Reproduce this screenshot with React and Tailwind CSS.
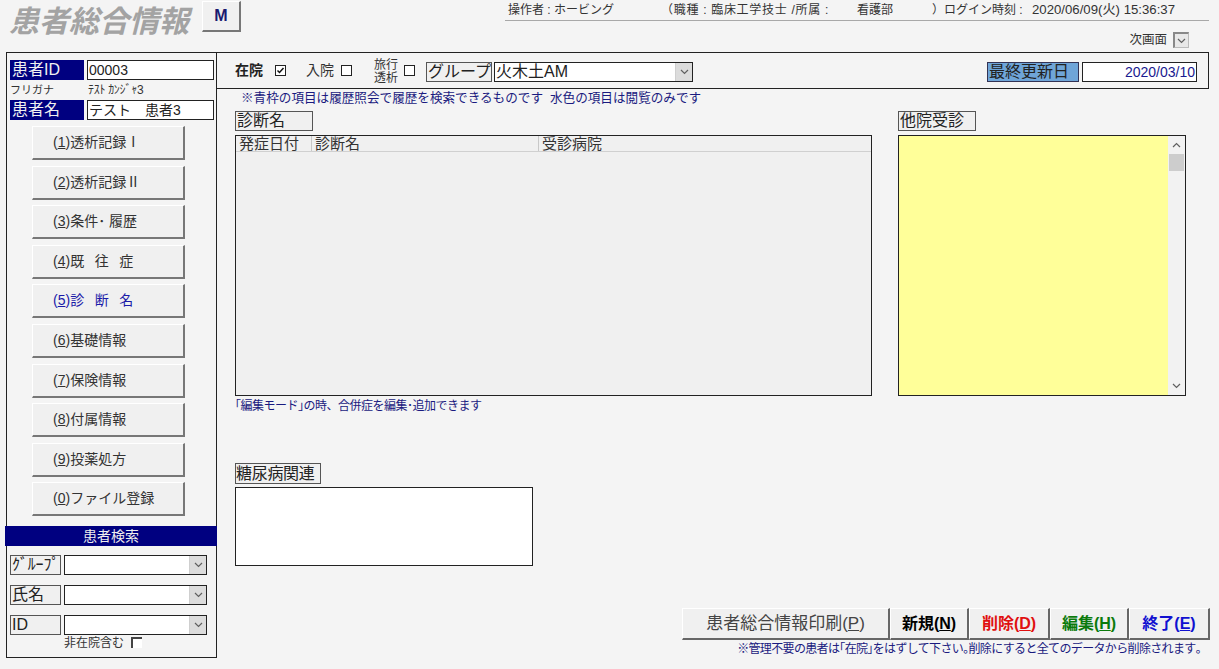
const JP = "font-['Liberation_Sans','Noto_Sans_CJK_JP',sans-serif]";

function Chevron({ className = "" }) {
  return (
    <svg width="9" height="6" viewBox="0 0 9 6" className={className}>
      <path d="M1 1 L4.5 4.5 L8 1" fill="none" stroke="#606060" strokeWidth="1.2" />
    </svg>
  );
}

function Combo({ text = "", className = "" }) {
  return (
    <div className={`flex border border-[#222] bg-white ${className}`}>
      <div className="flex-1 min-w-0 pl-px text-[16px] leading-[18px] text-[#222] whitespace-nowrap">{text}</div>
      <div className="w-[17px] bg-[#dcdcdc] border-l border-[#cfcfcf] flex items-center justify-center">
        <Chevron />
      </div>
    </div>
  );
}

function Label({ children, className = "" }) {
  return (
    <div className={`border border-[#555] bg-[#f0f0f0] text-[#222] whitespace-nowrap overflow-hidden ${className}`}>
      {children}
    </div>
  );
}

function Check({ checked, className = "" }) {
  return (
    <span className={`inline-flex w-[11px] h-[11px] border border-[#222] bg-white items-center justify-center ${className}`}>
      {checked && (
        <svg width="9" height="9" viewBox="0 0 9 9">
          <path d="M1.5 4.5 L3.5 6.5 L7.5 2" fill="none" stroke="#111" strokeWidth="1.5" />
        </svg>
      )}
    </span>
  );
}

function NavButton({ k, label, active }) {
  return (
    <div className={`h-[34px] w-[153px] ml-[25px] mb-[5.6px] flex items-center pl-[20px] text-[14px] bg-[#f0f0f0] border-t border-l border-white border-r-2 border-b-2 border-r-[#777] border-b-[#777] whitespace-nowrap ${active ? "text-[#1a1aa8]" : "text-[#333]"}`}>
      (<span className="underline">{k}</span>){label}
    </div>
  );
}

function ActionButton({ k, label, color, className = "" }) {
  return (
    <div className={`h-[32px] flex items-center justify-center text-[16px] font-bold bg-[#f0f0f0] border-t border-l border-white border-r-2 border-b-2 border-r-[#666] border-b-[#666] whitespace-nowrap ${color} ${className}`}>
      {label}(<span className="underline">{k}</span>)
    </div>
  );
}

const nav = [
  ["1", "透析記録Ⅰ"],
  ["2", "透析記録Ⅱ"],
  ["3", "条件･ 履歴"],
  ["4", "既\u2002\u2005往\u2002\u2005症"],
  ["5", "診\u2002\u2005断\u2002\u2005名", true],
  ["6", "基礎情報"],
  ["7", "保険情報"],
  ["8", "付属情報"],
  ["9", "投薬処方"],
  ["0", "ファイル登録"],
];

export default function App() {
  return (
    <div className={`w-[1219px] h-[669px] overflow-hidden bg-[#f4f4f4] text-[#222] ${JP}`}>
      {/* Header */}
      <div className="h-[52px] flex items-start">
        <div className="w-[190px] ml-[9px] mt-[1px] text-[30px] leading-[42px] font-bold italic text-[#a3a3a3] whitespace-nowrap">
          患者総合情報
        </div>
        <div className="ml-[3px] mt-[1px] w-[39px] h-[31px] flex items-center justify-center text-[16px] font-bold text-[#1a1a70] bg-[#f0f0f0] border-t border-l border-white border-r-2 border-b-2 border-r-[#777] border-b-[#777]">
          M
        </div>
        <div className="ml-[264px] flex flex-col">
          <div className="h-[21px] w-[704px] pl-[3px] border-b border-[#a8a8a8] flex items-center text-[12px] leading-[20px] text-[#333] whitespace-nowrap">
            <span className="w-[153px]">操作者 : ホービング</span>
            <span className="w-[196px] tracking-[0.7px]">（職種 : 臨床工学技士 /所属 :</span>
            <span className="w-[75px]">看護部</span>
            <span className="w-[100px]">）ログイン時刻 :</span>
            <span className="text-[13.2px]">2020/06/09(火) 15:36:37</span>
          </div>
          <div className="flex justify-end items-center h-[26px] w-[684px] mt-[6px] text-[12.5px] gap-[6px] text-[#333]">
            次画面
            <span className="w-[16px] h-[16px] border border-[#bbb] border-t-2 border-l-2 border-t-[#888] border-l-[#888] bg-[#e8e8e8] flex items-center justify-center">
              <Chevron />
            </span>
          </div>
        </div>
      </div>

      <div className="flex items-start">
        {/* Sidebar */}
        <div className="ml-[6px] w-[211px] h-[606px] border border-[#222] flex flex-col">
          <div className="flex mt-[7px] ml-[3px] h-[20px]">
            <div className="w-[74px] bg-[#000080] text-[#f0f0f0] text-[16px] leading-[20px] pl-[2px]">患者ID</div>
            <div className="ml-[3px] w-[127px] border border-[#222] bg-white text-[14px] leading-[18px] pl-[1px]">00003</div>
          </div>
          <div className="flex h-[20px] ml-[3px] items-center text-[11px] text-[#333]">
            <span className="w-[78px]">フリガナ</span>
            <span className="text-[12px] tracking-[-0.3px]">ﾃｽﾄ ｶﾝｼﾞｬ3</span>
          </div>
          <div className="flex ml-[3px] h-[20px]">
            <div className="w-[74px] bg-[#000080] text-[#f0f0f0] text-[16px] leading-[20px] pl-[2px]">患者名</div>
            <div className="ml-[3px] w-[127px] border border-[#222] bg-white text-[14px] leading-[18px] pl-[1px] whitespace-nowrap">テスト　患者3</div>
          </div>
          <div className="mt-[6px]">
            {nav.map(([k, l, a]) => (
              <NavButton key={k} k={k} label={l} active={a} />
            ))}
          </div>
          <div className="mt-[4px] -ml-[2px] w-[212px] h-[20px] bg-[#000080] text-[#eee] text-[14px] leading-[20px] text-center">患者検索</div>
          <div className="mt-[9px] ml-[3px] flex flex-col gap-[10px]">
            {[
              ["ｸﾞﾙｰﾌﾟ", "text-[16px] tracking-[-0.2px]"],
              ["氏名", "text-[16px]"],
              ["ID", "text-[16px]"],
            ].map(([t, c]) => (
              <div key={t} className="flex h-[20px] gap-[3px]">
                <Label className={`w-[51px] leading-[18px] pl-[1px] ${c}`}>{t}</Label>
                <Combo className="w-[143px]" />
              </div>
            ))}
          </div>
          <div className="ml-[57px] flex items-center h-[16px] text-[12px] text-[#333] gap-[7px]">
            非在院含む
            <span className="w-[11px] h-[11px] border-t-2 border-l-2 border-[#444] bg-white" />
          </div>
        </div>

        {/* Content */}
        <div className="flex-1">
          <div className="h-[37px] w-[992px] border border-l-0 border-[#222] flex items-center pl-[18px] text-[14px]">
            <span className="font-bold font-['Liberation_Serif','Noto_Sans_CJK_JP',serif] w-[40px]">在院</span>
            <Check checked />
            <span className="ml-[20px] text-[#333]">入院</span>
            <Check className="ml-[7px]" />
            <span className="ml-[22px] mt-[2px] w-[26px] text-[12px] leading-[13px] text-[#333]">旅行<br />透析</span>
            <Check className="ml-[4px]" />
            <Label className="ml-[11px] mt-[3px] w-[66px] h-[20px] text-[16px] leading-[18px] pl-[1px]">グループ</Label>
            <Combo text="火木土AM" className="ml-[2px] mt-[3px] w-[199px] h-[20px]" />
            <Label className="ml-[294px] mt-[3px] w-[92px] h-[20px] !bg-[#6fa5d8] !border-[#335] text-[16px] leading-[18px] pl-[1px]">最終更新日</Label>
            <div className="ml-[3px] mt-[3px] w-[115px] h-[20px] border border-[#222] bg-white text-[14px] leading-[18px] text-right pr-[1px] text-[#1a1a90]">2020/03/10</div>
          </div>
          <div className="h-[22px] pl-[24px] text-[12.6px] leading-[19px] text-[#1a1a80] whitespace-nowrap">
            ※青枠の項目は履歴照会で履歴を検索できるものです&nbsp;&nbsp;水色の項目は閲覧のみです
          </div>
          <div className="flex pl-[18px]">
            <div className="w-[637px]">
              <Label className="w-[78px] h-[20px] text-[16px] leading-[18px] pl-[1px]">診断名</Label>
              <div className="mt-[4px] h-[261px] border border-[#222] bg-[#f0f0f0]">
                <div className="h-[16px] flex border-b border-[#d0d0d0] text-[15px] leading-[15px] text-[#333]">
                  <div className="w-[76px] pl-[3px] border-r border-[#c8c8c8]">発症日付</div>
                  <div className="w-[227px] pl-[3px] border-r border-[#c8c8c8]">診断名</div>
                  <div className="pl-[3px]">受診病院</div>
                </div>
              </div>
              <div className="mt-[2px] h-[17px] text-[12px] tracking-[-0.5px] leading-[17px] text-[#1a1a80] whitespace-nowrap">｢編集モード｣の時、合併症を編集･追加できます</div>
              <Label className="mt-[48px] w-[86px] h-[21px] text-[16px] leading-[19px] tracking-[-0.3px]">糖尿病関連</Label>
              <div className="mt-[3px] w-[298px] h-[79px] border border-[#222] bg-white" />
            </div>
            <div className="ml-[26px] w-[288px]">
              <Label className="w-[78px] h-[20px] text-[16px] leading-[18px] pl-[1px]">他院受診</Label>
              <div className="mt-[4px] h-[261px] border border-[#222] bg-[#ffff99] flex justify-end">
                <div className="w-[17px] bg-[#f2f2f2] flex flex-col items-center">
                  <Chevron className="rotate-180 mt-[6px]" />
                  <div className="mt-[6px] w-[15px] h-[17px] bg-[#cdcdcd]" />
                  <div className="flex-1" />
                  <Chevron className="mb-[6px]" />
                </div>
              </div>
            </div>
          </div>
          <div className="mt-[42px] ml-[465px] flex">
            <ActionButton k="P" label="患者総合情報印刷" color="text-[#444] !font-normal" className="w-[208px] !text-[17px]" />
            <ActionButton k="N" label="新規" color="text-black" className="w-[79px]" />
            <ActionButton k="D" label="削除" color="text-[#e01010]" className="w-[81px]" />
            <ActionButton k="H" label="編集" color="text-[#0b7a0b]" className="w-[79px]" />
            <ActionButton k="E" label="終了" color="text-[#1010d0]" className="w-[81px]" />
          </div>
          <div className="w-[984px] text-right text-[12px] tracking-[-0.65px] leading-[18px] text-[#1a1a80] whitespace-nowrap">
            ※管理不要の患者は｢在院｣をはずして下さい｡削除にすると全てのデータから削除されます｡
          </div>
        </div>
      </div>
    </div>
  );
}
